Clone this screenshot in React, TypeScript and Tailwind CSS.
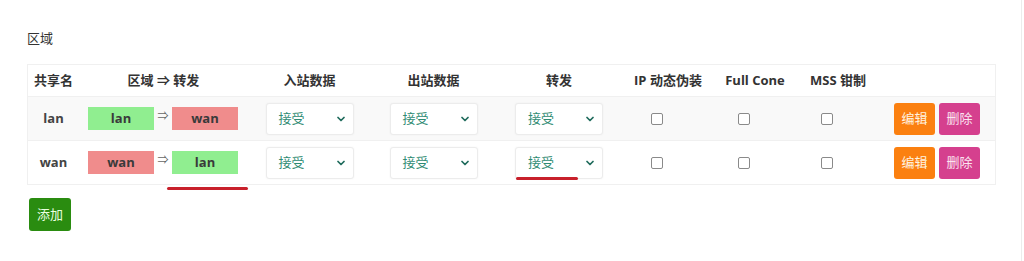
import { ChevronDown } from "lucide-react";

const font = { fontFamily: '"Open Sans", "Noto Sans CJK SC", sans-serif' };

function Chip({ zone }: { zone: "lan" | "wan" }) {
  return (
    <div
      className={
        "w-[66px] h-[23px] flex items-center justify-center text-[13px] font-bold text-[#3a3a3a] " +
        (zone === "lan" ? "bg-[#90ee90]" : "bg-[#f08c8c]")
      }
    >
      {zone}
    </div>
  );
}

function Select({ mark }: { mark?: boolean }) {
  return (
    <div className="relative w-[88px] h-[32px] bg-white border border-[#ececec] rounded-[3px] shadow-[0_0_2px_rgba(0,0,0,0.05)] flex items-center justify-between pl-[12px] pr-[6px]">
      <span className="text-[13px] text-[#2f8b73]">接受</span>
      <ChevronDown size={12} strokeWidth={3.5} className="text-[#1f6b5c]" />
      {mark && <div className="absolute left-0 top-[29px] w-[62px] h-[3px] rounded-full bg-[#c8202b]" />}
    </div>
  );
}

function Check() {
  return (
    <div className="flex justify-center pr-[22px]">
      <div className="w-[12px] h-[12px] border border-[#8a8a8a] rounded-[2px] bg-white" />
    </div>
  );
}

function Row({ name, from, to, shade, mark }: { name: string; from: "lan" | "wan"; to: "lan" | "wan"; shade?: boolean; mark?: boolean }) {
  return (
    <div
      className={
        "grid grid-cols-[51px_169px_123px_125px_126px_92px_82px_84px_115px] items-center h-[44px] border-t border-[#f0f0f0] " +
        (shade ? "bg-[#f9f9f9]" : "bg-white")
      }
    >
      <div className="text-center text-[13px] font-bold text-[#444]">{name}</div>
      <div className="relative flex items-center pl-[9px]">
        <Chip zone={from} />
        <span className="w-[18px] text-center text-[11px] text-[#666] -mt-[4px]">⇒</span>
        <Chip zone={to} />
        {mark && <div className="absolute left-[88px] top-[36px] w-[81px] h-[3px] rounded-full bg-[#c8202b]" />}
      </div>
      <div className="flex justify-center">
        <Select />
      </div>
      <div className="flex justify-center">
        <Select />
      </div>
      <div className="flex justify-center">
        <Select mark={mark} />
      </div>
      <Check />
      <Check />
      <Check />
      <div className="flex justify-center gap-[4px] pr-[1px]">
        <button className="w-[41px] h-[32px] rounded-[3px] bg-[#fb8010] text-[13px] text-[#fff4e0]">编辑</button>
        <button className="w-[41px] h-[32px] rounded-[3px] bg-[#d5408e] text-[13px] text-[#fbe4f0]">删除</button>
      </div>
    </div>
  );
}

export default function App() {
  return (
    <div className="w-full h-[261px] bg-white" style={font}>
      <div className="w-[1022px] h-full border-r border-[#ececec] pt-[29px]">
        <div className="pl-[27px] text-[13px] text-[#333] leading-[18px]">区域</div>
        <div className="ml-[27px] mt-[17px] w-[969px] border border-[#f0f0f0]">
          <div className="grid grid-cols-[51px_169px_123px_125px_126px_92px_82px_84px_115px] items-center h-[31px] text-[13px] font-bold text-[#333]">
            <div className="text-center">共享名</div>
            <div className="text-center">区域 ⇒ 转发</div>
            <div className="text-center">入站数据</div>
            <div className="text-center">出站数据</div>
            <div className="text-center">转发</div>
            <div className="text-center">IP 动态伪装</div>
            <div className="text-center">Full Cone</div>
            <div className="text-center">MSS 钳制</div>
            <div />
          </div>
          <Row name="lan" from="lan" to="wan" shade />
          <Row name="wan" from="wan" to="lan" mark />
        </div>
        <div className="pl-[29px] mt-[13px]">
          <button className="w-[42px] h-[33px] rounded-[3px] bg-[#2a8c10] text-[13px] text-[#eaffe0]">添加</button>
        </div>
      </div>
    </div>
  );
}
